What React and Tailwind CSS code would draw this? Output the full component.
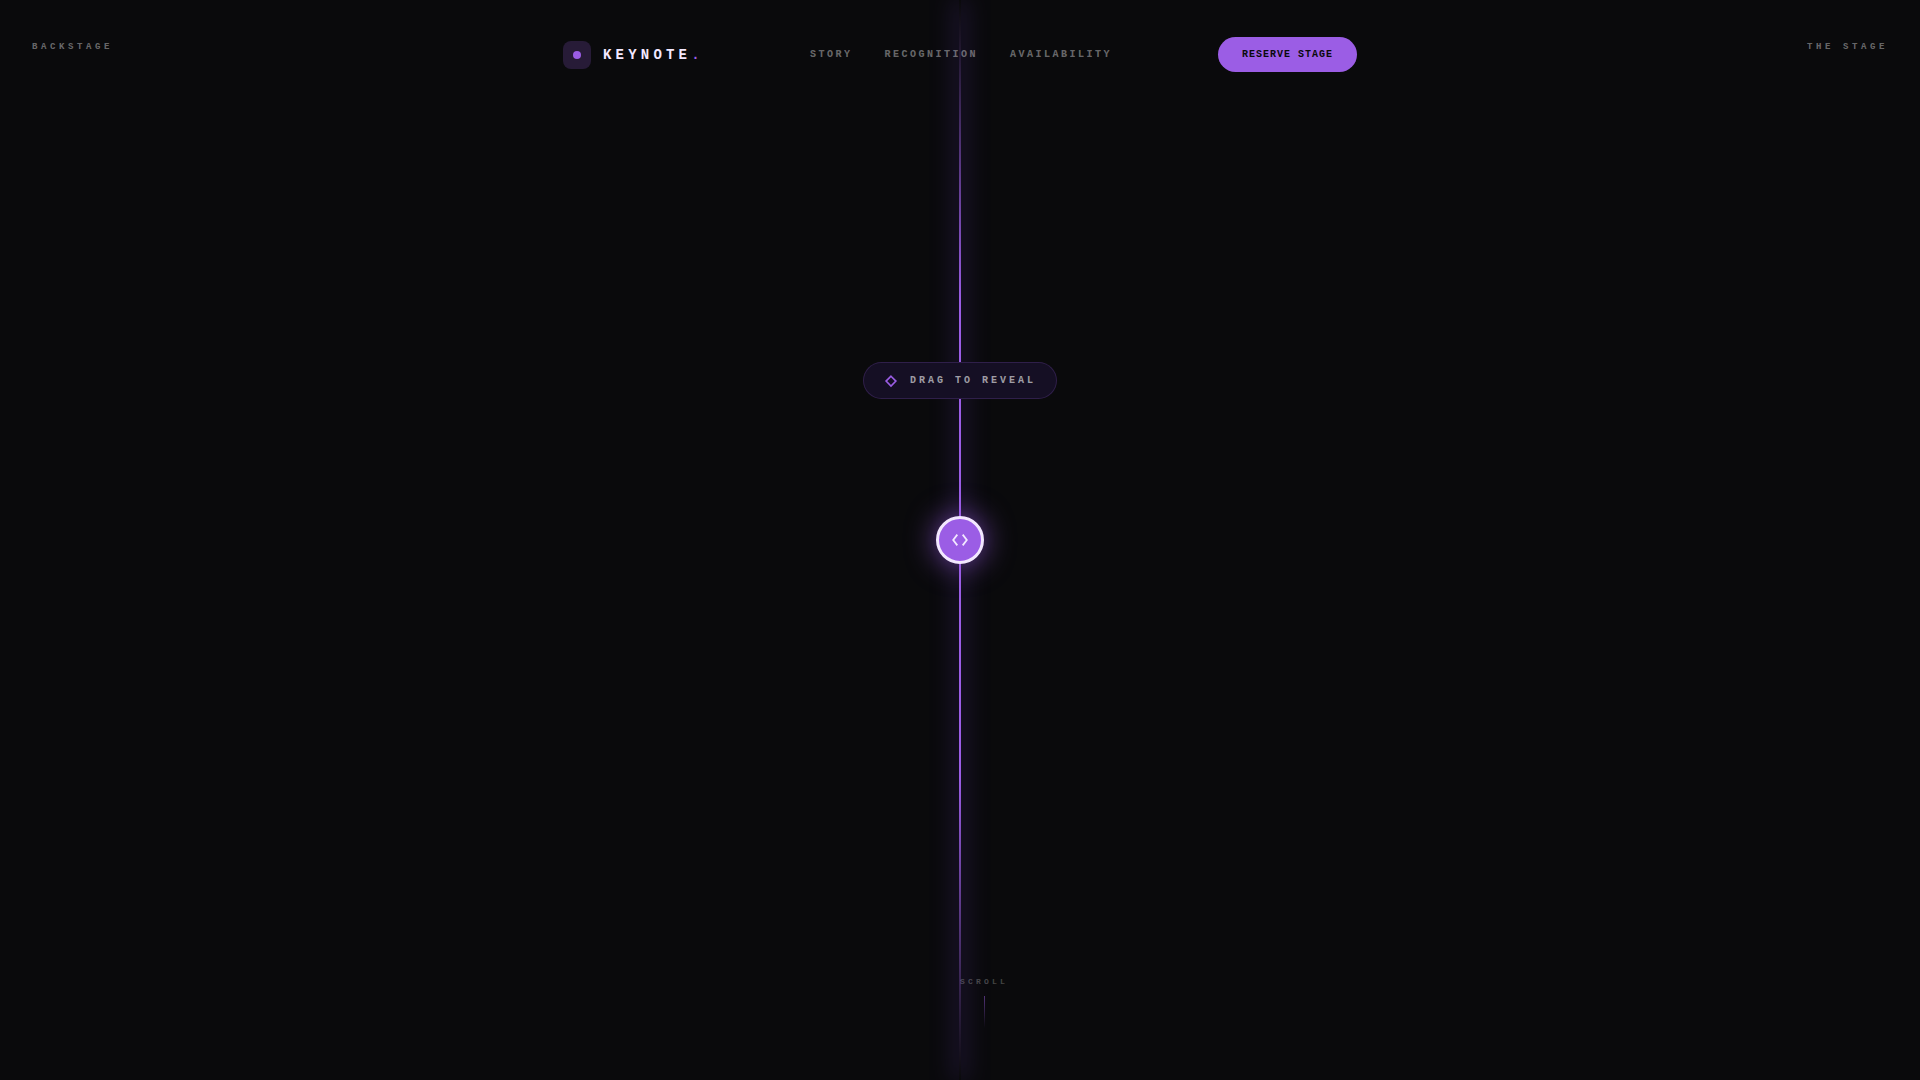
const navLinks = [
  { label: 'STORY', href: '#story' },
  { label: 'RECOGNITION', href: '#recognition' },
  { label: 'AVAILABILITY', href: '#availability' },
];

function Logo() {
  return (
    <a href="#top" className="flex items-center gap-3">
      <span className="flex h-7 w-7 items-center justify-center rounded-lg bg-[#9b5de5]/20">
        <span className="h-2 w-2 rounded-full bg-[#9b5de5]" />
      </span>
      <span className="text-sm tracking-[0.3em] text-[#f3e8ff]">
        KEYNOTE<span className="text-[#9b5de5]">.</span>
      </span>
    </a>
  );
}

function Header() {
  return (
    <header className="flex w-full items-start justify-between px-8 pt-[37px]">
      <span className="pt-[3px] text-[9px] leading-[14px] tracking-[0.4em] text-white/40">BACKSTAGE</span>
      <div className="flex w-full max-w-[794px] items-center justify-between">
        <Logo />
        <nav className="flex gap-8">
          {navLinks.map((link) => (
            <a
              key={link.href}
              href={link.href}
              className="text-[10px] leading-[15px] tracking-[0.25em] text-white/40 hover:text-white"
            >
              {link.label}
            </a>
          ))}
        </nav>
        <button
          type="button"
          className="rounded-full bg-[#9b5de5] px-6 py-2.5 text-[10px] leading-[15px] tracking-[0.1em] text-[#0a0a0c]"
        >
          RESERVE STAGE
        </button>
      </div>
      <span className="pt-[3px] text-[9px] leading-[14px] tracking-[0.4em] text-white/40">THE STAGE</span>
    </header>
  );
}

function Divider() {
  return (
    <div className="absolute inset-y-0 left-1/2 w-0.5 -translate-x-1/2 bg-[linear-gradient(to_bottom,transparent,#9b5de5_28%,#9b5de5_72%,transparent)] shadow-[0_0_24px_1px_rgba(125,75,229,0.6)]" />
  );
}

function Handle() {
  return (
    <button
      type="button"
      aria-label="Drag to reveal"
      className="absolute top-1/2 left-1/2 flex h-12 w-12 -translate-x-1/2 -translate-y-1/2 cursor-ew-resize items-center justify-center rounded-full border-3 border-[#f3e8ff] bg-[#9b5de5] shadow-[0_0_30px_rgba(155,93,229,0.7)]"
    >
      <svg width="20" height="20" viewBox="0 0 20 20" fill="none" stroke="#f3e8ff" strokeWidth="1.8">
        <path d="M7.3 4.6 3.2 10l4.1 5.4M12.7 4.6l4.1 5.4-4.1 5.4" />
      </svg>
    </button>
  );
}

function Hint() {
  return (
    <div className="absolute top-1/2 left-1/2 -mt-[178px] flex -translate-x-1/2 items-center gap-3 rounded-full border border-[#9b5de5]/20 bg-[#150f24] px-5 py-2.5 whitespace-nowrap">
      <svg width="14" height="14" viewBox="0 0 14 14" fill="none" stroke="#9b5de5" strokeWidth="1.6">
        <path d="M7 2.2 11.9 7.1 7 12 2.1 7.1z" />
      </svg>
      <span className="text-[10px] leading-[15px] tracking-[0.3em] text-white/60">DRAG TO REVEAL</span>
    </div>
  );
}

export default function App() {
  return (
    <main
      id="top"
      className="relative flex min-h-screen flex-col overflow-hidden bg-[#0a0a0c] font-['Liberation_Mono',monospace] font-bold"
    >
      <Divider />
      <div className="relative z-10">
        <Header />
      </div>
      <Hint />
      <Handle />
      <div className="relative mt-auto ml-[50%] flex flex-col items-center gap-2 self-start pb-13">
        <span className="text-[8px] leading-3 tracking-[0.4em] text-white/25">SCROLL</span>
        <span className="h-8 w-px bg-linear-to-b from-[#9b5de5]/50 to-transparent" />
      </div>
    </main>
  );
}
